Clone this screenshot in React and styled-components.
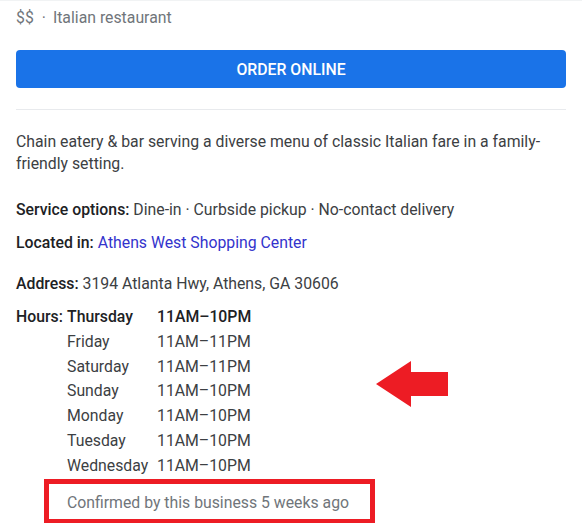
import React from 'react'
import styled, { createGlobalStyle } from 'styled-components'

const Global = createGlobalStyle`
  body {
    margin: 0;
    background: #fff;
    font-family: Roboto, "Liberation Sans", Arial, sans-serif;
  }
`

const Panel = styled.div`
  position: relative;
  width: 582px;
  height: 523px;
  box-sizing: border-box;
  border-top: 1px solid #f1f3f4;
  padding: 0 16px;
  overflow: hidden;
  color: #3c4043;
  font-size: 15.8px;
`

const Subtitle = styled.div`
  margin-top: 7px;
  line-height: 20px;
  color: #70757a;
`

const Dot = styled.span`
  margin: 0 7px 0 8px;
`

const OrderButton = styled.button`
  display: block;
  width: 100%;
  height: 38px;
  margin-top: 22px;
  border: none;
  border-radius: 4px;
  background: #1a73e8;
  color: #fff;
  font-family: inherit;
  font-size: 15.8px;
  font-weight: 500;
  cursor: pointer;
`

const Divider = styled.hr`
  margin: 21px 0 0;
  border: none;
  height: 1px;
  background: #e8eaed;
`

const Description = styled.p`
  margin: 21px 0 0;
  line-height: 22px;
  color: #3c4043;
`

const InfoLine = styled.div`
  margin-top: ${p => p.gap}px;
  line-height: 22px;
  color: #3c4043;
`

const Label = styled.span`
  font-weight: 500;
  color: #202124;
`

const Link = styled.a`
  color: #3333cc;
  text-decoration: none;
`

const HoursGrid = styled.div`
  margin-top: 10px;
  display: grid;
  grid-template-columns: 51px 90px auto;
  line-height: 24.8px;
  color: #3c4043;
`

const Cell = styled.div`
  font-weight: ${p => (p.bold ? 500 : 400)};
  color: ${p => (p.bold ? '#202124' : '#3c4043')};
  white-space: nowrap;
`

const Confirmed = styled.div`
  margin-left: 28px;
  width: 331px;
  height: 45px;
  box-sizing: border-box;
  border: 5px solid #ed1c24;
  padding: 2px 0 0 18px;
  display: flex;
  align-items: center;
  color: #70757a;
`

const Arrow = styled.svg`
  position: absolute;
  left: 376px;
  top: 360px;
`

const hours = [
  ['Thursday', '11AM–10PM'],
  ['Friday', '11AM–11PM'],
  ['Saturday', '11AM–11PM'],
  ['Sunday', '11AM–10PM'],
  ['Monday', '11AM–10PM'],
  ['Tuesday', '11AM–10PM'],
  ['Wednesday', '11AM–10PM'],
]

export default function App() {
  return (
    <>
      <Global />
      <Panel>
        <Subtitle>
          $$<Dot>·</Dot>Italian restaurant
        </Subtitle>
        <OrderButton>ORDER ONLINE</OrderButton>
        <Divider />
        <Description>
          Chain eatery &amp; bar serving a diverse menu of classic Italian fare in a family-friendly setting.
        </Description>
        <InfoLine gap={24}>
          <Label>Service options:</Label> Dine-in · Curbside pickup · No-contact delivery
        </InfoLine>
        <InfoLine gap={11}>
          <Label>Located in:</Label> <Link href="#">Athens West Shopping Center</Link>
        </InfoLine>
        <InfoLine gap={19}>
          <Label>Address:</Label> 3194 Atlanta Hwy, Athens, GA 30606
        </InfoLine>
        <HoursGrid>
          {hours.map(([day, time], i) => (
            <React.Fragment key={day}>
              <Cell bold>{i === 0 ? 'Hours:' : ''}</Cell>
              <Cell bold={i === 0}>{day}</Cell>
              <Cell bold={i === 0}>{time}</Cell>
            </React.Fragment>
          ))}
        </HoursGrid>
        <Confirmed>Confirmed by this business 5 weeks ago</Confirmed>
        <Arrow width="72" height="47" viewBox="0 0 72 47">
          <polygon points="0,23 35,0 35,11 72,11 72,35 35,35 35,46" fill="#ed1c24" />
        </Arrow>
      </Panel>
    </>
  )
}
